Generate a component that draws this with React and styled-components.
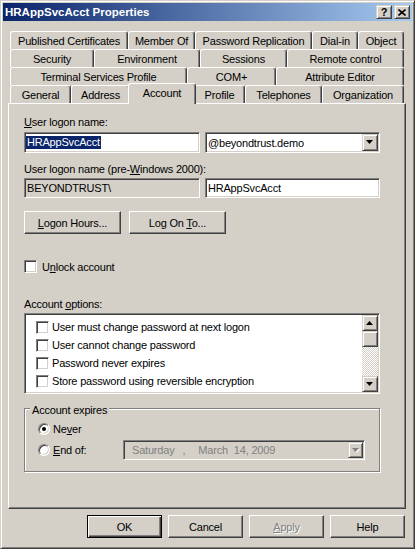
import React from "react";
import styled, { createGlobalStyle, css } from "styled-components";

const FACE = "#D4D0C8";
const LIGHT = "#FFFFFF";
const SHADOW = "#808080";
const DARK = "#404040";

const GlobalStyle = createGlobalStyle`
  html, body { margin: 0; padding: 0; background: ${FACE}; }
  body {
    font-family: "Liberation Sans", Arial, sans-serif;
    font-size: 11px;
    color: #000;
  }
  * { box-sizing: border-box; }
`;

const raised = css`
  border: 1px solid;
  border-color: ${LIGHT} ${DARK} ${DARK} ${LIGHT};
  box-shadow: inset -1px -1px ${SHADOW};
`;

const raisedSmall = css`
  border: 1px solid;
  border-color: ${FACE} ${DARK} ${DARK} ${FACE};
  box-shadow: inset 1px 1px ${LIGHT}, inset -1px -1px ${SHADOW};
`;

const sunken = css`
  border: 1px solid;
  border-color: ${SHADOW} ${LIGHT} ${LIGHT} ${SHADOW};
  box-shadow: inset 1px 1px ${DARK}, inset -1px -1px ${FACE};
`;

const Window = styled.div`
  width: 415px;
  height: 549px;
  display: flex;
  flex-direction: column;
  background: ${FACE};
  border: 1px solid;
  border-color: ${FACE} ${DARK} ${DARK} ${FACE};
  box-shadow: inset 1px 1px ${LIGHT}, inset -1px -1px ${SHADOW};
  padding: 2px;
  letter-spacing: -0.2px;
`;

const TitleBar = styled.div`
  flex: none;
  height: 18px;
  display: flex;
  align-items: center;
  padding: 0 2px;
  background: linear-gradient(to right, #0a246a, #a6caf0);
  color: #fff;
`;

const Title = styled.div`
  flex: 1;
  font-weight: bold;
  font-size: 11.5px;
  letter-spacing: 0;
`;

const CaptionButton = styled.div`
  width: 16px;
  height: 14px;
  margin-left: ${(p) => p.$gap || 0}px;
  ${raisedSmall};
  background: ${FACE};
  color: #000;
  display: flex;
  align-items: center;
  justify-content: center;
  font-weight: bold;
  font-size: 11px;
  letter-spacing: 0;
`;

const Body = styled.div`
  flex: 1;
  display: flex;
  flex-direction: column;
  padding: 10px 6px 0 5px;
`;

const TabRows = styled.div`
  display: flex;
  flex-direction: column;
  padding: 0 2px;
`;

const TabRow = styled.div`
  display: flex;
  height: 18px;
  align-items: flex-start;
`;

const Tab = styled.div`
  flex: none;
  width: ${(p) => p.$w}px;
  height: 18px;
  display: flex;
  align-items: center;
  justify-content: center;
  white-space: nowrap;
  background: ${FACE};
  border-top: 1px solid ${LIGHT};
  border-left: 1px solid ${LIGHT};
  border-right: 1px solid ${DARK};
  box-shadow: inset -1px 0 ${SHADOW};
  border-radius: 3px 3px 0 0;
  ${(p) =>
    p.$active &&
    css`
      width: ${p.$w + 4}px;
      height: 21px;
      margin: -2px -2px -1px;
      padding-bottom: 3px;
      position: relative;
      z-index: 1;
    `}
`;

const Panel = styled.div`
  height: 406px;
  flex: none;
  display: flex;
  flex-direction: column;
  align-items: flex-start;
  border: 1px solid;
  border-color: ${LIGHT} ${DARK} ${DARK} ${LIGHT};
  box-shadow: inset -1px -1px ${SHADOW};
  padding: 12px 25px 0 15px;
`;

const Label = styled.div`
  margin-top: ${(p) => p.$mt || 0}px;
  line-height: 13px;
  white-space: nowrap;
`;

const Key = styled.u`
  text-decoration: underline;
`;

const Row = styled.div`
  display: flex;
  align-items: center;
  gap: ${(p) => p.$gap || 0}px;
  margin-top: ${(p) => p.$mt || 0}px;
`;

const Edit = styled.div`
  width: ${(p) => p.$w}px;
  height: ${(p) => p.$h}px;
  ${sunken};
  background: ${(p) => (p.$readOnly ? FACE : "#fff")};
  display: flex;
  align-items: center;
  padding-left: ${(p) => p.$pad ?? 2}px;
  white-space: nowrap;
`;

const Selected = styled.span`
  background: #0a246a;
  color: #fff;
  line-height: 13px;
  padding: 0 1px;
`;

const Combo = styled(Edit)`
  padding: 1px 1px 1px 2px;
  justify-content: space-between;
`;

const DropButton = styled.div`
  width: 16px;
  height: 17px;
  flex: none;
  ${raisedSmall};
  background: ${FACE};
  display: flex;
  align-items: center;
  justify-content: center;
`;

const PushButton = styled.div`
  width: ${(p) => p.$w}px;
  height: 23px;
  ${raised};
  display: flex;
  align-items: center;
  justify-content: center;
  white-space: nowrap;
  ${(p) =>
    p.$default &&
    css`
      border: 1px solid #000;
      box-shadow: inset 1px 1px ${LIGHT}, inset -1px -1px ${DARK},
        inset -2px -2px ${SHADOW};
    `}
  ${(p) =>
    p.$disabled &&
    css`
      color: ${SHADOW};
      text-shadow: 1px 1px ${LIGHT};
    `}
`;

const CheckBox = styled.div`
  width: 13px;
  height: 13px;
  flex: none;
  ${sunken};
  background: #fff;
`;

const ListBox = styled.div`
  width: 356px;
  height: 81px;
  margin-top: 2px;
  ${sunken};
  background: #fff;
  display: flex;
  padding: 1px;
`;

const ListItems = styled.div`
  flex: 1;
  padding: 3px 0 0 10px;
`;

const ListItem = styled.div`
  height: 18px;
  display: flex;
  align-items: center;
  gap: 3px;
  white-space: nowrap;
`;

const ScrollBar = styled.div`
  width: 16px;
  display: flex;
  flex-direction: column;
`;

const ScrollButton = styled.div`
  height: 16px;
  flex: none;
  ${raisedSmall};
  background: ${FACE};
  display: flex;
  align-items: center;
  justify-content: center;
`;

const ScrollTrack = styled.div`
  flex: 1;
  background: repeating-conic-gradient(${LIGHT} 0 25%, ${FACE} 0 50%) 0 0 / 2px 2px;
`;

const GroupBox = styled.div`
  width: 356px;
  height: 64px;
  margin-top: 14px;
  border: 1px solid ${SHADOW};
  box-shadow: inset 1px 1px ${LIGHT}, 1px 1px ${LIGHT};
  display: flex;
  flex-direction: column;
  align-items: stretch;
  padding: 0 14px 0 13px;
`;

const Legend = styled.div`
  align-self: flex-start;
  margin: -5px 0 0 -8px;
  padding: 0 2px;
  line-height: 13px;
  background: ${FACE};
`;

const RadioRow = styled.div`
  display: flex;
  align-items: center;
  height: ${(p) => p.$h}px;
  margin-top: ${(p) => p.$mt}px;
  gap: 3px;
`;

const Radio = styled.div`
  width: 12px;
  height: 12px;
  flex: none;
  border-radius: 50%;
  border: 1px solid;
  border-color: ${SHADOW} ${LIGHT} ${LIGHT} ${SHADOW};
  box-shadow: inset 1px 1px ${DARK}, inset -1px -1px ${FACE};
  background: #fff;
  display: flex;
  align-items: center;
  justify-content: center;
  &::after {
    content: "";
    width: 4px;
    height: 4px;
    border-radius: 50%;
    background: ${(p) => (p.$on ? "#000" : "transparent")};
  }
`;

const DatePicker = styled.div`
  margin-left: auto;
  width: 242px;
  height: 20px;
  ${sunken};
  background: ${FACE};
  color: ${SHADOW};
  display: flex;
  align-items: center;
  padding: 1px 1px 1px 8px;
  white-space: nowrap;
`;

const DatePart = styled.span`
  margin-left: ${(p) => p.$gap || 0}px;
`;

const DateButton = styled(DropButton)`
  margin-left: auto;
  height: 16px;
  width: 15px;
`;

const ButtonBar = styled.div`
  display: flex;
  justify-content: flex-end;
  gap: 6px;
  margin-top: 6px;
  padding-right: 1px;
`;

const Arrow = ({ up, color = "#000", shade }) => (
  <svg width="8" height="5" viewBox="0 0 8 5">
    {shade && (
      <path
        d={up ? "M4 1 L8 5 L1 5 Z" : "M1 1 L8 1 L4.5 5 Z"}
        fill={shade}
      />
    )}
    <path d={up ? "M3.5 0 L7 4 L0 4 Z" : "M0 0 L7 0 L3.5 4 Z"} fill={color} />
  </svg>
);

const CloseGlyph = () => (
  <svg width="8" height="7" viewBox="0 0 8 7">
    <path d="M0.5 0.5 L7.5 6.5 M7.5 0.5 L0.5 6.5" stroke="#000" strokeWidth="1.6" />
  </svg>
);

const tabRows = [
  [
    ["Published Certificates", 118],
    ["Member Of", 67],
    ["Password Replication", 117],
    ["Dial-in", 46],
    ["Object", 46],
  ],
  [
    ["Security", 84],
    ["Environment", 106],
    ["Sessions", 87],
    ["Remote control", 117],
  ],
  [
    ["Terminal Services Profile", 177],
    ["COM+", 89],
    ["Attribute Editor", 128],
  ],
  [
    ["General", 61],
    ["Address", 59],
    ["Account", 64, true],
    ["Profile", 51],
    ["Telephones", 77],
    ["Organization", 82],
  ],
];

const options = [
  "User must change password at next logon",
  "User cannot change password",
  "Password never expires",
  "Store password using reversible encryption",
];

export default function App() {
  return (
    <>
      <GlobalStyle />
      <Window>
        <TitleBar>
          <Title>HRAppSvcAcct Properties</Title>
          <CaptionButton>?</CaptionButton>
          <CaptionButton $gap={2}>
            <CloseGlyph />
          </CaptionButton>
        </TitleBar>
        <Body>
          <TabRows>
            {tabRows.map((row, i) => (
              <TabRow key={i}>
                {row.map(([name, w, active]) => (
                  <Tab key={name} $w={w} $active={active}>
                    {name}
                  </Tab>
                ))}
              </TabRow>
            ))}
          </TabRows>
          <Panel>
            <Label>
              <Key>U</Key>ser logon name:
            </Label>
            <Row $mt={3} $gap={5}>
              <Edit $w={176} $h={21} $pad={1}>
                <Selected>HRAppSvcAcct</Selected>
              </Edit>
              <Combo $w={175} $h={21}>
                <span>@beyondtrust.demo</span>
                <DropButton>
                  <Arrow />
                </DropButton>
              </Combo>
            </Row>
            <Label $mt={10}>
              User logon name (pre-<Key>W</Key>indows 2000):
            </Label>
            <Row $mt={2} $gap={5}>
              <Edit $w={176} $h={20} $readOnly>
                BEYONDTRUST\
              </Edit>
              <Edit $w={175} $h={20}>
                HRAppSvcAcct
              </Edit>
            </Row>
            <Row $mt={13} $gap={8}>
              <PushButton $w={97}>
                <span>
                  <Key>L</Key>ogon Hours...
                </span>
              </PushButton>
              <PushButton $w={97}>
                <span>
                  Log On <Key>T</Key>o...
                </span>
              </PushButton>
            </Row>
            <Row $mt={26} $gap={5}>
              <CheckBox />
              <span>
                U<Key>n</Key>lock account
              </span>
            </Row>
            <Label $mt={25}>
              Account <Key>o</Key>ptions:
            </Label>
            <ListBox>
              <ListItems>
                {options.map((o) => (
                  <ListItem key={o}>
                    <CheckBox />
                    {o}
                  </ListItem>
                ))}
              </ListItems>
              <ScrollBar>
                <ScrollButton>
                  <Arrow up />
                </ScrollButton>
                <ScrollButton />
                <ScrollTrack />
                <ScrollButton>
                  <Arrow />
                </ScrollButton>
              </ScrollBar>
            </ListBox>
            <GroupBox>
              <Legend>Account expires</Legend>
              <RadioRow $h={16} $mt={4}>
                <Radio $on />
                <span>
                  Ne<Key>v</Key>er
                </span>
              </RadioRow>
              <RadioRow $h={20} $mt={3}>
                <Radio />
                <span>
                  <Key>E</Key>nd of:
                </span>
                <DatePicker>
                  <DatePart>Saturday</DatePart>
                  <DatePart $gap={8}>,</DatePart>
                  <DatePart $gap={13}>March</DatePart>
                  <DatePart $gap={6}>14, 2009</DatePart>
                  <DateButton>
                    <Arrow color={SHADOW} shade={LIGHT} />
                  </DateButton>
                </DatePicker>
              </RadioRow>
            </GroupBox>
          </Panel>
          <ButtonBar>
            <PushButton $w={75} $default>
              OK
            </PushButton>
            <PushButton $w={75}>Cancel</PushButton>
            <PushButton $w={75} $disabled>
              <span>
                <Key>A</Key>pply
              </span>
            </PushButton>
            <PushButton $w={75}>Help</PushButton>
          </ButtonBar>
        </Body>
      </Window>
    </>
  );
}
